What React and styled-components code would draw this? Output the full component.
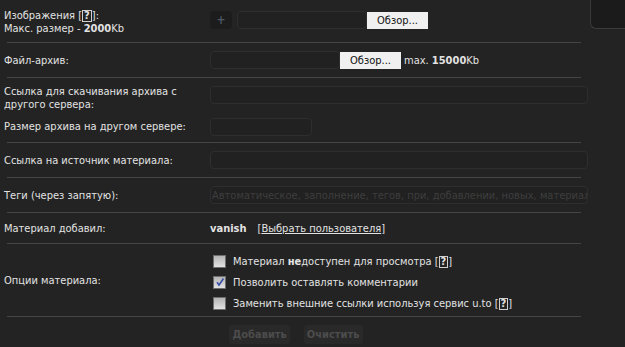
import styled, { createGlobalStyle } from "styled-components";

const GlobalStyle = createGlobalStyle`
    body {
        margin: 0;
        background: #232323;
        font-family: "DejaVu Sans Condensed", "DejaVu Sans", sans-serif;
        font-size: 11px;
        color: #e2e2e2;
    }
`;

const options = [
    { text: <>Материал <b>не</b>доступен для просмотра <Help /></>, checked: false },
    { text: <>Позволить оставлять комментарии</>, checked: true },
    { text: <>Заменить внешние ссылки используя сервис u.to <Help /></>, checked: false },
];

function Help() {
    return <span>[<HelpMark>?</HelpMark>]</span>;
}

function Check({ checked }) {
    return (
        <CheckBoxSC>
            {checked && (
                <svg width="10" height="10" viewBox="0 0 10 10">
                    <path d="M2 5.2 L4 8 L8.5 1.5" fill="none" stroke="#3a4fa8" strokeWidth="1.6" />
                </svg>
            )}
        </CheckBoxSC>
    );
}

export default function App() {
    return (
        <PageSC>
            <GlobalStyle />
            <FormSC>
                <RowSC $h={42} $top={9}>
                    <LabelSC>
                        Изображения <Help />:<br />
                        Макс. размер - <b>2000</b>Kb
                    </LabelSC>
                    <FieldLineSC $top={2}>
                        <PlusSC>+</PlusSC>
                        <InputSC $w={130} $ml={5} />
                        <BrowseSC>Обзор...</BrowseSC>
                    </FieldLineSC>
                </RowSC>
                <DividerSC />
                <RowSC $h={34}>
                    <LabelSC>Файл-архив:</LabelSC>
                    <FieldLineSC>
                        <InputSC $w={130} />
                        <BrowseSC>Обзор...</BrowseSC>
                        <NoteSC>max. <b>15000</b>Kb</NoteSC>
                    </FieldLineSC>
                </RowSC>
                <DividerSC />
                <RowSC $h={33} $top={7}>
                    <LabelSC>
                        Ссылка для скачивания архива с<br />
                        другого сервера:
                    </LabelSC>
                    <FieldLineSC $top={1}>
                        <InputSC />
                    </FieldLineSC>
                </RowSC>
                <RowSC $h={31}>
                    <LabelSC>Размер архива на другом сервере:</LabelSC>
                    <FieldLineSC>
                        <InputSC $w={102} />
                    </FieldLineSC>
                </RowSC>
                <DividerSC />
                <RowSC $h={34}>
                    <LabelSC>Ссылка на источник материала:</LabelSC>
                    <FieldLineSC>
                        <InputSC />
                    </FieldLineSC>
                </RowSC>
                <DividerSC />
                <RowSC $h={34}>
                    <LabelSC>Теги (через запятую):</LabelSC>
                    <FieldLineSC>
                        <InputSC>
                            <PlaceholderSC>
                                Автоматическое, заполнение, тегов, при, добавлении, новых, материал
                            </PlaceholderSC>
                        </InputSC>
                    </FieldLineSC>
                </RowSC>
                <DividerSC />
                <RowSC $h={30}>
                    <LabelSC>Материал добавил:</LabelSC>
                    <FieldLineSC>
                        <b>vanish</b>
                        <UserLinkSC>
                            [<u>Выбрать пользователя</u>]
                        </UserLinkSC>
                    </FieldLineSC>
                </RowSC>
                <DividerSC />
                <RowSC $h={72}>
                    <LabelSC>Опции материала:</LabelSC>
                    <OptionListSC>
                        {options.map((o, i) => (
                            <OptionSC key={i}>
                                <Check checked={o.checked} />
                                <span>{o.text}</span>
                            </OptionSC>
                        ))}
                    </OptionListSC>
                </RowSC>
                <DividerSC />
                <ActionsSC>
                    <ActionSC>Добавить</ActionSC>
                    <ActionSC>Очистить</ActionSC>
                </ActionsSC>
            </FormSC>
            <SideSC>
                <SideBoxSC />
            </SideSC>
        </PageSC>
    );
}

const PageSC = styled.div`
    display: flex;
    width: 625px;
    height: 347px;
    overflow: hidden;
`;

const FormSC = styled.div`
    width: 584px;
    padding-left: 4px;
    flex-shrink: 0;
`;

const RowSC = styled.div`
    display: grid;
    grid-template-columns: 206px 1fr;
    height: ${(p) => p.$h}px;
    align-items: ${(p) => (p.$top !== undefined ? "start" : "center")};
    padding-top: ${(p) => p.$top || 0}px;
    box-sizing: border-box;
`;

const LabelSC = styled.div`
    line-height: 13px;
    white-space: nowrap;
`;

const FieldLineSC = styled.div`
    display: flex;
    align-items: center;
    margin-top: ${(p) => p.$top || 0}px;
    min-width: 0;
`;

const DividerSC = styled.div`
    margin-left: 3px;
    width: 574px;
    height: 1px;
    background: #454545;
`;

const InputSC = styled.div`
    box-sizing: border-box;
    height: 18px;
    width: ${(p) => (p.$w ? `${p.$w}px` : "100%")};
    margin-left: ${(p) => p.$ml || 0}px;
    background: #212121;
    border: 1px solid #2e2e2e;
    border-radius: 4px;
    overflow: hidden;
    display: flex;
    align-items: center;
    flex-shrink: 0;
`;

const PlaceholderSC = styled.span`
    font-size: 11px;
    color: #3e3e3e;
    white-space: nowrap;
    padding-left: 1px;
`;

const PlusSC = styled.div`
    width: 22px;
    height: 18px;
    border-radius: 4px;
    background: #1c1c1c;
    color: #4d5866;
    font-size: 12px;
    font-weight: bold;
    display: flex;
    align-items: center;
    justify-content: center;
`;

const BrowseSC = styled.div`
    width: 61px;
    height: 17px;
    background: #f0f0f0;
    color: #111;
    display: flex;
    align-items: center;
    justify-content: center;
    flex-shrink: 0;
`;

const NoteSC = styled.span`
    margin-left: 3px;
    white-space: nowrap;
`;

const HelpMark = styled.span`
    display: inline-block;
    border: 1px solid #cfcfcf;
    line-height: 10px;
    padding: 0 1px;
    font-weight: bold;
`;

const UserLinkSC = styled.span`
    margin-left: 11px;
    white-space: nowrap;
`;

const OptionListSC = styled.div`
    display: flex;
    flex-direction: column;
    gap: 7px;
    padding-left: 3px;
    padding-top: 4px;
`;

const OptionSC = styled.div`
    display: flex;
    align-items: center;
    gap: 7px;
    height: 14px;
    white-space: nowrap;
`;

const CheckBoxSC = styled.span`
    box-sizing: border-box;
    width: 13px;
    height: 13px;
    border: 1px solid #6e6e6e;
    background: linear-gradient(#b4b4b4, #e2e2e2);
    display: flex;
    align-items: center;
    justify-content: center;
`;

const ActionsSC = styled.div`
    display: flex;
    justify-content: center;
    gap: 14px;
    padding-top: 8px;
`;

const ActionSC = styled.div`
    height: 19px;
    padding: 0 3px;
    border-radius: 3px;
    background: #292929;
    color: #4c4c4c;
    font-weight: bold;
    font-size: 11px;
    display: flex;
    align-items: center;
`;

const SideSC = styled.div`
    flex: 1;
    padding-left: 2px;
`;

const SideBoxSC = styled.div`
    height: 28px;
    background: #1b1b1b;
    border-left: 1px solid #3a3a3a;
    border-bottom: 1px solid #3a3a3a;
    border-bottom-left-radius: 6px;
`;
